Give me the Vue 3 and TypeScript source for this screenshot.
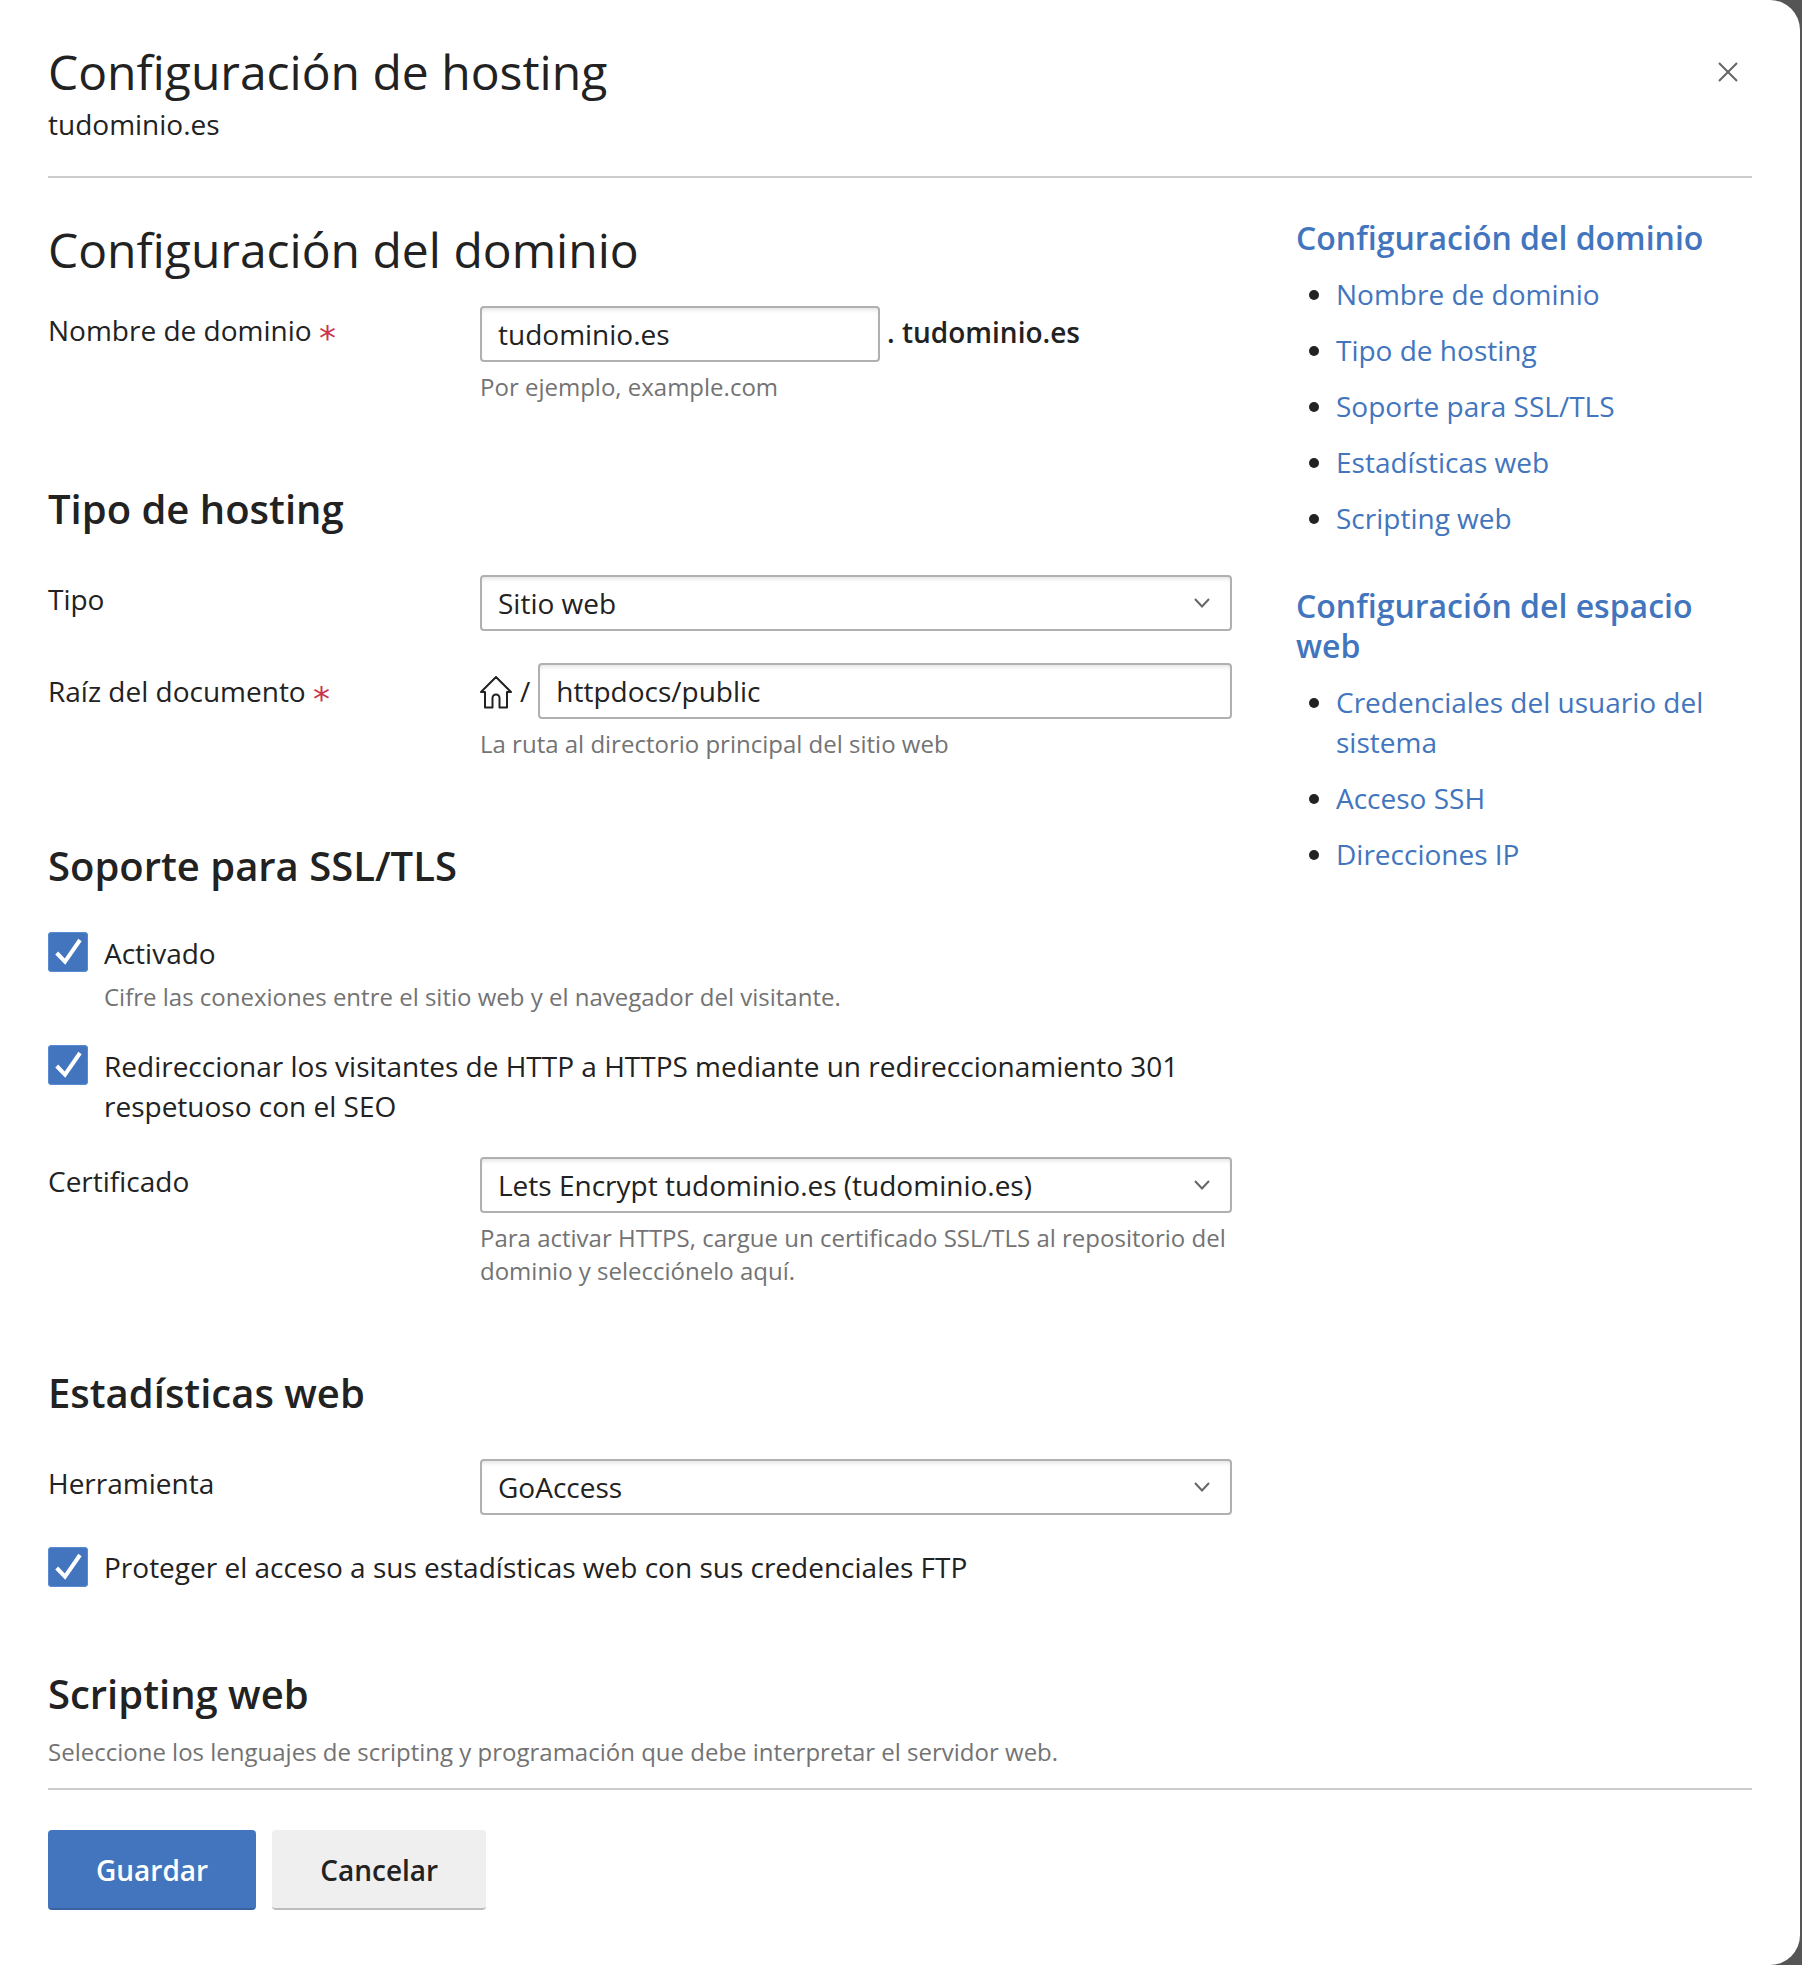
<script setup lang="ts">
interface NavGroup {
  title: string
  items: string[]
}

const navGroups: NavGroup[] = [
  {
    title: 'Configuración del dominio',
    items: ['Nombre de dominio', 'Tipo de hosting', 'Soporte para SSL/TLS', 'Estadísticas web', 'Scripting web'],
  },
  {
    title: 'Configuración del espacio web',
    items: ['Credenciales del usuario del sistema', 'Acceso SSH', 'Direcciones IP'],
  },
]
</script>

<template>
  <div class="window">
    <header class="head">
      <div>
        <h1 class="title">Configuración de hosting</h1>
        <div class="subtitle">tudominio.es</div>
      </div>
      <button class="close" aria-label="Cerrar">
        <svg width="20" height="20" viewBox="0 0 20 20"><path d="M1 1 19 19M19 1 1 19" /></svg>
      </button>
    </header>

    <div class="content">
      <main class="main">
        <h2 class="section-title">Configuración del dominio</h2>

        <div class="row first-row">
          <label class="label">Nombre de dominio <span class="req">*</span></label>
          <div class="field">
            <div class="inline">
              <input class="input short" value="tudominio.es" />
              <strong class="suffix">. tudominio.es</strong>
            </div>
            <div class="hint">Por ejemplo, example.com</div>
          </div>
        </div>

        <h3 class="h3 hosting">Tipo de hosting</h3>
        <div class="row">
          <label class="label">Tipo</label>
          <div class="field">
            <div class="select">
              <span>Sitio web</span>
              <svg width="16" height="10" viewBox="0 0 16 10"><path d="M1 1 8 8.500 15 1" /></svg>
            </div>
          </div>
        </div>
        <div class="row gap-row">
          <label class="label root-label">Raíz del documento <span class="req">*</span></label>
          <div class="field">
            <div class="inline">
              <svg class="home" width="32" height="34" viewBox="0 0 32 34">
                <path d="M1 17 16 2 31 17H27V32.500H19.500V23A3.500 3.500 0 0 0 12.500 23V32.500H5V17Z" />
              </svg>
              <span class="slash">/</span>
              <input class="input grow" value="httpdocs/public" />
            </div>
            <div class="hint">La ruta al directorio principal del sitio web</div>
          </div>
        </div>

        <h3 class="h3 ssl">Soporte para SSL/TLS</h3>
        <div class="check">
          <span class="box">
            <svg width="40" height="40" viewBox="0 0 40 40"><path d="M8.700 21 17 29.700 32 8" /></svg>
          </span>
          <div class="check-text">
            <div>Activado</div>
            <div class="hint check-hint">Cifre las conexiones entre el sitio web y el navegador del visitante.</div>
          </div>
        </div>
        <div class="check next-check">
          <span class="box">
            <svg width="40" height="40" viewBox="0 0 40 40"><path d="M8.700 21 17 29.700 32 8" /></svg>
          </span>
          <div class="check-text">Redireccionar los visitantes de HTTP a HTTPS mediante un redireccionamiento 301 respetuoso con el SEO</div>
        </div>
        <div class="row cert-row">
          <label class="label">Certificado</label>
          <div class="field">
            <div class="select">
              <span>Lets Encrypt tudominio.es (tudominio.es)</span>
              <svg width="16" height="10" viewBox="0 0 16 10"><path d="M1 1 8 8.500 15 1" /></svg>
            </div>
            <div class="hint tall">Para activar HTTPS, cargue un certificado SSL/TLS al repositorio del dominio y selecciónelo aquí.</div>
          </div>
        </div>

        <h3 class="h3 stats">Estadísticas web</h3>
        <div class="row">
          <label class="label">Herramienta</label>
          <div class="field">
            <div class="select">
              <span>GoAccess</span>
              <svg width="16" height="10" viewBox="0 0 16 10"><path d="M1 1 8 8.500 15 1" /></svg>
            </div>
          </div>
        </div>
        <div class="check next-check">
          <span class="box">
            <svg width="40" height="40" viewBox="0 0 40 40"><path d="M8.700 21 17 29.700 32 8" /></svg>
          </span>
          <div>Proteger el acceso a sus estadísticas web con sus credenciales FTP</div>
        </div>

        <h3 class="h3 scripting">Scripting web</h3>
        <div class="hint script-hint">Seleccione los lenguajes de scripting y programación que debe interpretar el servidor web.</div>
      </main>

      <aside class="aside">
        <nav v-for="group in navGroups" :key="group.title" class="nav-group">
          <a class="nav-title">{{ group.title }}</a>
          <ul class="nav-list">
            <li v-for="item in group.items" :key="item"><a>{{ item }}</a></li>
          </ul>
        </nav>
      </aside>
    </div>

    <footer class="foot">
      <button class="btn primary">Guardar</button>
      <button class="btn">Cancelar</button>
    </footer>
  </div>
</template>

<style scoped>
.window {
  box-sizing: border-box;
  width: 1800px;
  height: 1965px;
  padding: 0 48px;
  background: #fff;
  border-radius: 0 30px 30px 0;
  color: #222;
  font: 28px/40px "Open Sans", sans-serif;
}
.head {
  display: flex;
  justify-content: space-between;
  box-sizing: border-box;
  height: 178px;
  padding-top: 44px;
  border-bottom: 2px solid #ccc;
}
.title {
  margin: 0 0 4px;
  font-size: 48px;
  line-height: 56px;
  font-weight: 400;
}
.subtitle {
  line-height: 40px;
}
.close {
  width: 20px;
  height: 20px;
  margin: 18px 14px 0 0;
  padding: 0;
  border: 0;
  background: none;
}
.close svg {
  display: block;
}
.close path {
  fill: none;
  stroke: #666;
  stroke-width: 2;
}
.content {
  display: flex;
  justify-content: space-between;
}
.main {
  width: 1184px;
  padding-top: 42px;
}
.section-title {
  margin: 0;
  font-size: 48px;
  line-height: 60px;
  font-weight: 400;
}
.h3 {
  margin: 0;
  font-size: 40px;
  line-height: 48px;
  font-weight: 600;
}
.hosting {
  margin: 82px 0 42px;
}
.ssl {
  margin: 82px 0 42px;
}
.stats {
  margin: 82px 0 42px;
}
.scripting {
  margin: 83px 0 18px;
}
.row {
  display: flex;
}
.first-row {
  margin-top: 26px;
}
.gap-row {
  margin-top: 32px;
}
.cert-row {
  margin-top: 31px;
}
.label {
  width: 432px;
  flex: none;
  padding-top: 4px;
}
.root-label {
  padding-top: 8px;
}
.req {
  display: inline-block;
  color: #c9354d;
  font-family: "DejaVu Sans", sans-serif;
  font-size: 34px;
  line-height: 0;
  vertical-align: -9px;
}
.field {
  flex: 1;
  min-width: 0;
}
.inline {
  display: flex;
  align-items: center;
}
.input {
  box-sizing: border-box;
  height: 56px;
  padding: 0 16px;
  border: 2px solid #b0b0b0;
  border-radius: 4px;
  background: #fff;
  box-shadow: inset 0 4px 4px -2px #e4e4e4;
  color: #222;
  font: inherit;
  outline: none;
}
.short {
  width: 400px;
}
.grow {
  flex: 1;
  min-width: 0;
}
.suffix {
  margin: -4px 0 0 7px;
  font-weight: 600;
}
.home {
  flex: none;
  margin-top: 2px;
}
.home path {
  fill: none;
  stroke: #222;
  stroke-width: 2;
  stroke-linejoin: round;
}
.slash {
  margin: 0 8px;
}
.hint {
  margin-top: 9px;
  color: #737373;
  font-size: 24px;
  line-height: 32px;
}
.check-hint {
  margin-top: 8px;
}
.tall {
  line-height: 33px;
  margin-top: 8px;
}
.script-hint {
  margin: 0 0 20px;
}
.select {
  display: flex;
  align-items: center;
  justify-content: space-between;
  box-sizing: border-box;
  height: 56px;
  padding: 0 20px 0 16px;
  border: 2px solid #b0b0b0;
  border-radius: 4px;
  box-shadow: inset 0 4px 4px -2px #e4e4e4;
}
.select path {
  fill: none;
  stroke: #666;
  stroke-width: 2;
}
.check {
  display: flex;
  gap: 16px;
}
.check-text {
  padding-top: 1px;
}
.next-check {
  margin-top: 32px;
}
.box {
  flex: none;
  display: block;
  width: 40px;
  height: 40px;
  border-radius: 4px;
  background: #4275be;
  box-shadow: inset 0 0 0 1px #5a8bd0;
}
.box svg {
  display: block;
}
.box path {
  fill: none;
  stroke: #fff;
  stroke-width: 4;
}
.aside {
  width: 456px;
  padding-top: 40px;
}
.nav-group + .nav-group {
  margin-top: 48px;
}
.nav-title {
  display: block;
  color: #4275be;
  font-size: 32px;
  line-height: 40px;
  font-weight: 600;
}
.nav-list {
  margin: 16px 0 0;
  padding: 0 0 0 40px;
}
.nav-list li + li {
  margin-top: 16px;
}
.nav-list a {
  color: #4275be;
}
.foot {
  display: flex;
  gap: 16px;
  padding-top: 40px;
  border-top: 2px solid #ccc;
}
.btn {
  height: 80px;
  padding: 2px 48px 0;
  border: 0;
  border-bottom: 2px solid #bdbdbd;
  border-radius: 4px;
  background: #efefef;
  color: #222;
  font: 600 28px/40px "Open Sans", sans-serif;
}
.primary {
  background: #4275be;
  border-bottom-color: #37629f;
  color: #fff;
}
</style>

<style>
body {
  background: #555;
}
</style>
